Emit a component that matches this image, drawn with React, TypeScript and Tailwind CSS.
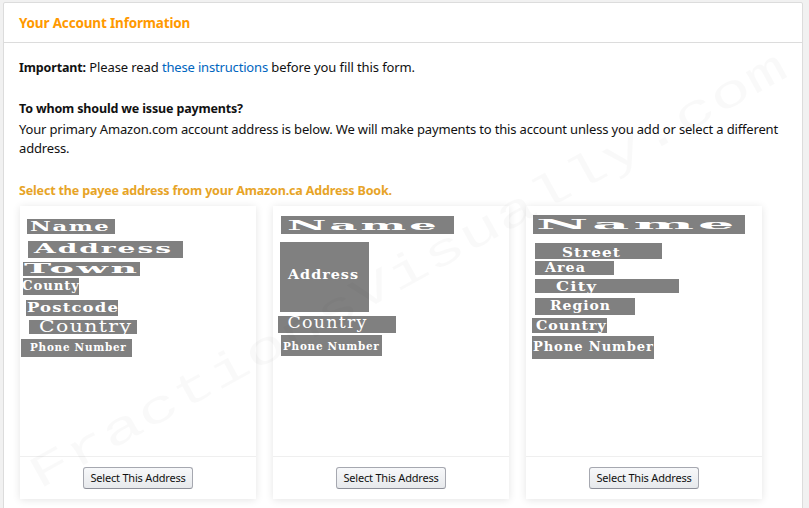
import { clsx } from "clsx";

interface Label {
  text: string;
  // size and margins of the grey bar
  bar: string;
  // left edge, top of the capitals, drawn width and capital height, in px
  x: number;
  y: number;
  width: number;
  cap: number;
  // natural width of the text in em
  em: number;
  thin?: boolean;
}

const cards: Label[][] = [
  [
    { text: "Name", bar: "mt-[13px] ml-[7px] h-[15px] w-[88px]", x: 3, y: 3, width: 79, cap: 9.5, em: 3.26 },
    { text: "Address", bar: "mt-[7px] ml-[8px] h-[17px] w-[155px]", x: 6, y: 3, width: 137, cap: 10, em: 4.46 },
    { text: "Town", bar: "mt-[4px] ml-[3px] h-[14px] w-[117px]", x: 1, y: 2.5, width: 113, cap: 9, em: 2.88 },
    { text: "County", bar: "mt-[2px] ml-[3px] h-[17px] w-[56px]", x: -1, y: 3, width: 57, cap: 10, em: 3.96 },
    { text: "Postcode", bar: "mt-[5px] ml-[6px] h-[16px] w-[92px]", x: 1, y: 3, width: 91, cap: 10, em: 5.03 },
    { text: "Country", bar: "mt-[4px] ml-[9px] h-[14px] w-[108px]", x: 10, y: 1, width: 92, cap: 11.5, em: 4.1, thin: true },
    { text: "Phone Number", bar: "mt-[5px] ml-[1px] h-[18px] w-[111px]", x: 9, y: 4, width: 96, cap: 8.5, em: 8.42 },
  ],
  [
    { text: "Name", bar: "mt-[10px] ml-[8px] h-[18px] w-[173px]", x: 6, y: 5, width: 150, cap: 9, em: 3.26 },
    { text: "Address", bar: "mt-[8px] ml-[7px] h-[70px] w-[89px]", x: 8, y: 28, width: 70, cap: 9.5, em: 4.46 },
    { text: "Country", bar: "mt-[4px] ml-[5px] h-[17px] w-[118px]", x: 9.5, y: 0.5, width: 79, cap: 11.5, em: 4.1, thin: true },
    { text: "Phone Number", bar: "mt-[2px] ml-[8px] h-[21px] w-[101px]", x: 2, y: 7, width: 96, cap: 8.5, em: 8.42 },
  ],
  [
    { text: "Name", bar: "mt-[9px] ml-[7px] h-[19px] w-[212px]", x: 3, y: 5, width: 199, cap: 9, em: 3.26 },
    { text: "Street", bar: "mt-[9px] ml-[9px] h-[16px] w-[127px]", x: 27, y: 5, width: 58, cap: 9, em: 3.45 },
    { text: "Area", bar: "mt-[2px] ml-[9px] h-[14px] w-[79px]", x: 10, y: 2, width: 40, cap: 9, em: 2.59 },
    { text: "City", bar: "mt-[4px] ml-[9px] h-[14px] w-[144px]", x: 21, y: 3, width: 40, cap: 9, em: 2.22 },
    { text: "Region", bar: "mt-[5px] ml-[9px] h-[17px] w-[100px]", x: 15, y: 3, width: 60, cap: 9.5, em: 3.94 },
    { text: "Country", bar: "mt-[3px] ml-[6px] h-[15px] w-[75px]", x: 4, y: 2.5, width: 70, cap: 9.5, em: 4.49 },
    { text: "Phone Number", bar: "mt-[3px] ml-[6px] h-[23px] w-[122px]", x: 1, y: 6, width: 120, cap: 9.5, em: 8.42 },
  ],
];

const RedactedLine = ({ text, bar, x, y, width, cap, em, thin }: Label) => {
  const size = cap / 0.729;
  const spacing = 0.07 * size;
  const scale = width / (em * size + spacing * (text.length - 1));

  return (
    <div className={clsx("shrink-0 bg-[#808080]", bar)}>
      <span
        className={clsx(
          "block w-max origin-top-left leading-none whitespace-nowrap text-white font-['DejaVu_Serif',serif]",
          thin ? "font-normal" : "font-bold"
        )}
        style={{
          fontSize: size,
          letterSpacing: spacing,
          transform: `translate(${x}px, ${y - size * 0.117}px) scaleX(${scale})`,
        }}
      >
        {text}
      </span>
    </div>
  );
};

const AddressCard = ({ lines }: { lines: Label[] }) => {
  return (
    <li className="flex h-[293px] w-[236px] flex-col bg-white shadow-[0_1px_8px_rgba(0,0,0,0.11)]">
      <div className="flex h-[250px] flex-col">
        {lines.map((line) => (
          <RedactedLine key={line.text} {...line} />
        ))}
      </div>
      <div className="flex flex-1 justify-center border-t border-[#efefef] pt-[10px]">
        <button className="h-[22px] w-[110px] rounded-[3px] border border-[#a6a8b0] border-b-[#8d8f99] bg-linear-to-b from-[#f7f8fa] to-[#e7e9ec] text-[11px] leading-[20px] tracking-[-0.2px] whitespace-nowrap text-[#111]">
          Select This Address
        </button>
      </div>
    </li>
  );
};

export default function App() {
  return (
    <div className="relative h-[508px] w-[809px] overflow-hidden bg-[#f1f1f1] pt-[2px] pl-[3px] font-['Noto_Sans',sans-serif] text-[13px] leading-[19px] text-[#111]">
      <main className="h-[520px] w-[800px] rounded-t-[2px] border border-[#dcdcdc] bg-white">
        <header className="h-[40px] border-b border-[#dcdcdc] pt-[11px] pl-[15px]">
          <h1 className="text-[13.5px] font-bold tracking-[-0.17px] text-[#ff9900]">Your Account Information</h1>
        </header>

        <section className="pt-[15px] pl-[15px] whitespace-nowrap">
          <p className="tracking-[-0.1px]">
            <strong className="text-[12.5px] font-bold tracking-[-0.14px]">Important:</strong> Please read{" "}
            <a className="tracking-[-0.17px] text-[#0066c0]">these instructions</a> before you fill this form.
          </p>
          <h2 className="mt-[22px] text-[12.5px] font-bold tracking-[-0.16px]">To whom should we issue payments?</h2>
          <p className="mt-[2px] tracking-[-0.163px]">
            Your primary Amazon.com account address is below. We will make payments to this account unless you add or select a different
            <br />
            address.
          </p>
          <h3 className="mt-[23px] text-[12.5px] font-bold tracking-[-0.16px] text-[#e7a427]">
            Select the payee address from your Amazon.ca Address Book.
          </h3>
        </section>

        <ul className="mt-[6px] flex gap-[17px] pl-[16px]">
          {cards.map((lines, i) => (
            <AddressCard key={i} lines={lines} />
          ))}
        </ul>
      </main>

      {/* watermark */}
      <div className="pointer-events-none absolute inset-0 flex items-center justify-center">
        <span className="translate-x-[4px] translate-y-[18px] rotate-[-28.9deg] scale-x-[1.48] font-['Liberation_Mono',monospace] text-[46px] leading-none whitespace-nowrap text-black/[0.025]">
          FractionsVisually.com
        </span>
      </div>
    </div>
  );
}
